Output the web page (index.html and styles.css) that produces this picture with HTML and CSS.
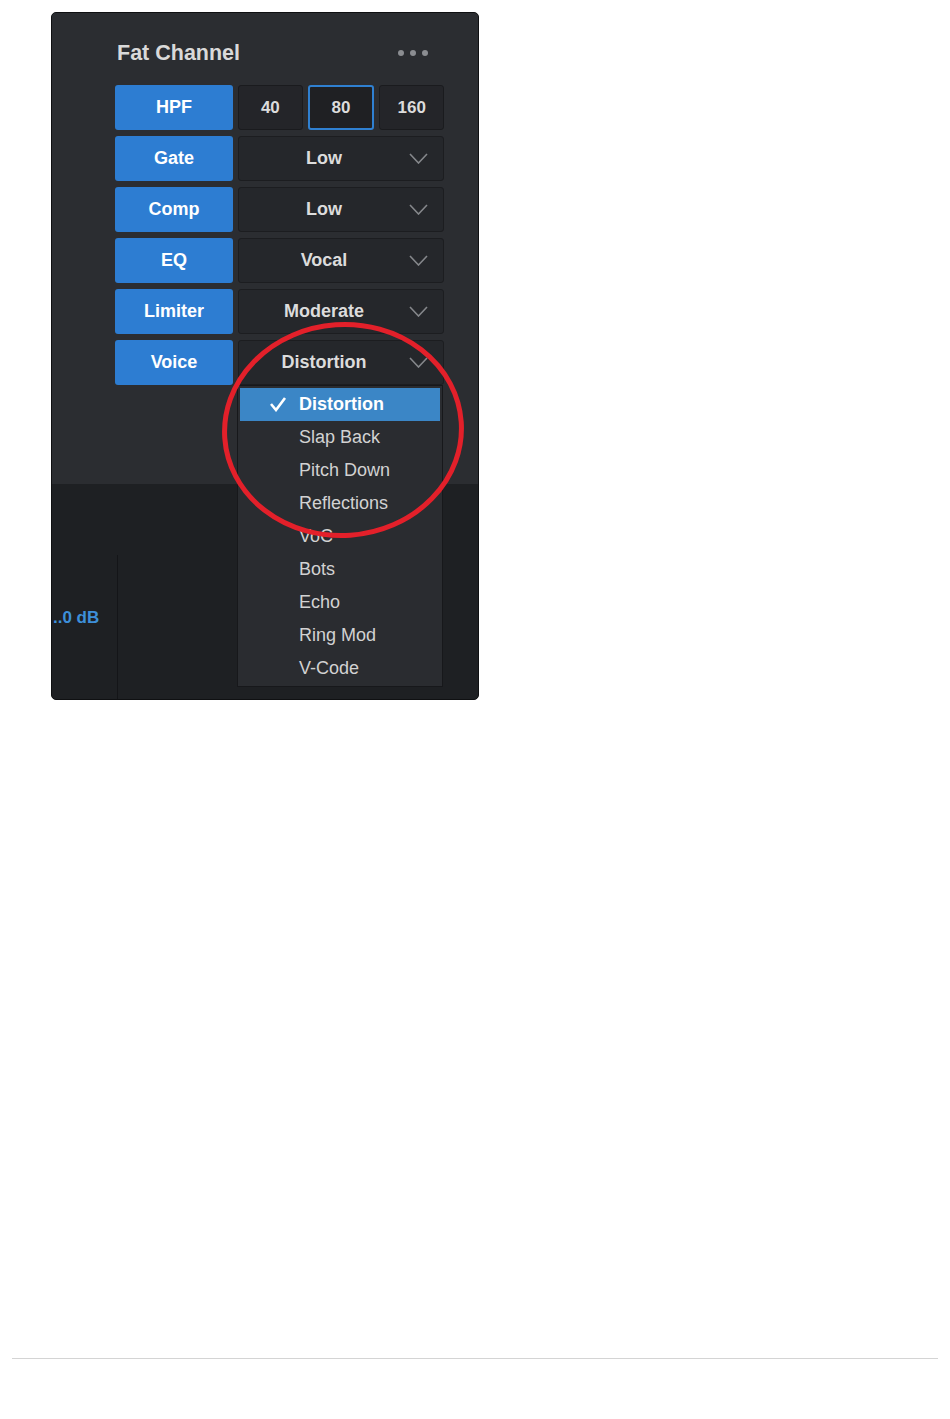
FILE: index.html
```html
<!DOCTYPE html>
<html lang="en">
<head>
  <meta charset="UTF-8" />
  <meta name="viewport" content="width=device-width, initial-scale=1.0"/>
  <title>Fat Channel Voice Presets</title>
  <link rel="stylesheet" href="styles.css">
</head>
<body>

  <div class="post">
    <!-- SCREENSHOT PANEL -->
    <div class="panel">
      <div class="panel-top">
        <div class="title-row">
          <h2>Fat Channel</h2>
          <svg class="dots" width="30" height="8" viewBox="0 0 30 8">
            <circle cx="3" cy="4" r="3" />
            <circle cx="15" cy="4" r="3" />
            <circle cx="27" cy="4" r="3" />
          </svg>
        </div>

        <div class="controls">
          <button class="btn-blue">HPF</button>
          <div class="freq">
            <button class="btn-dark">40</button>
            <button class="btn-dark active">80</button>
            <button class="btn-dark">160</button>
          </div>

          <button class="btn-blue">Gate</button>
          <div class="select"><span>Low</span><svg class="chev" width="19" height="11" viewBox="0 0 19 11"><polyline points="1,1 9.5,10 18,1" /></svg></div>

          <button class="btn-blue">Comp</button>
          <div class="select"><span>Low</span><svg class="chev" width="19" height="11" viewBox="0 0 19 11"><polyline points="1,1 9.5,10 18,1" /></svg></div>

          <button class="btn-blue">EQ</button>
          <div class="select"><span>Vocal</span><svg class="chev" width="19" height="11" viewBox="0 0 19 11"><polyline points="1,1 9.5,10 18,1" /></svg></div>

          <button class="btn-blue">Limiter</button>
          <div class="select"><span>Moderate</span><svg class="chev" width="19" height="11" viewBox="0 0 19 11"><polyline points="1,1 9.5,10 18,1" /></svg></div>

          <button class="btn-blue">Voice</button>
          <div class="select"><span>Distortion</span><svg class="chev" width="19" height="11" viewBox="0 0 19 11"><polyline points="1,1 9.5,10 18,1" /></svg></div>
        </div>
      </div>

      <div class="panel-bottom">
        <div class="meter">
          <span class="db">..0 dB</span>
        </div>
      </div>

      <!-- OPEN DROPDOWN -->
      <ul class="menu">
        <li class="selected">
          <svg class="check" width="18" height="16" viewBox="0 0 18 16"><polyline points="2,8 7,14 16,2" /></svg>
          Distortion
        </li>
        <li>Slap Back</li>
        <li>Pitch Down</li>
        <li>Reflections</li>
        <li>VoC</li>
        <li>Bots</li>
        <li>Echo</li>
        <li>Ring Mod</li>
        <li>V-Code</li>
      </ul>

      <!-- red annotation circle -->
      <svg class="ring" width="426" height="686" viewBox="0 0 426 686">
        <ellipse cx="291" cy="417" rx="118.5" ry="105.5" transform="rotate(-4 291 417)" />
      </svg>
    </div>

    <div class="rule"></div>
  </div>

</body>
</html>
```

FILE: styles.css
```css
* {
  box-sizing: border-box;
  margin: 0;
  padding: 0;
}

body {
  font-family: "Liberation Sans", Arial, sans-serif;
  background: #fff;
}

.post {
  padding: 12px 12px 0;
}

.panel {
  position: relative;
  width: 428px;
  height: 688px;
  margin-left: 39px;
  display: flex;
  flex-direction: column;
  border: 1px solid #0f1012;
  border-radius: 5px;
  overflow: hidden;
  background: #1e2023;
}

.panel-top {
  height: 471px;
  background: #2b2d31;
  padding: 28px 0 0 63px;
}

.title-row {
  width: 313px;
  height: 24px;
  display: flex;
  justify-content: space-between;
  align-items: center;
  padding-left: 2px;
  margin-bottom: 20px;
}

.title-row h2 {
  font-size: 21.5px;
  font-weight: bold;
  color: #d9d9d9;
}

.dots circle {
  fill: #8b8d91;
}

.controls {
  display: grid;
  grid-template-columns: 118px 206px;
  grid-auto-rows: 45px;
  column-gap: 5px;
  row-gap: 6px;
}

button {
  font-family: inherit;
  border: none;
  cursor: pointer;
}

.btn-blue {
  background: #2d7dd2;
  color: #fff;
  font-size: 18px;
  font-weight: bold;
  border-radius: 3px;
}

.freq {
  display: flex;
  gap: 5px;
}

.btn-dark {
  flex: 1;
  background: #242529;
  border: 1px solid #1a1b1e;
  color: #dcdcdc;
  font-size: 17px;
  font-weight: bold;
  border-radius: 3px;
}

.btn-dark.active {
  background: #1f2023;
  border: 2px solid #2f80d1;
}

.select {
  display: flex;
  align-items: center;
  background: #25272b;
  border: 1px solid #1c1d20;
  border-radius: 3px;
  padding-right: 15px;
}

.select span {
  flex: 1;
  text-align: center;
  color: #dcdcdc;
  font-size: 18px;
  font-weight: bold;
}

.chev polyline {
  fill: none;
  stroke: #85878b;
  stroke-width: 1.6;
}

.panel-bottom {
  flex: 1;
  display: flex;
}

.meter {
  width: 66px;
  margin-top: 71px;
  border-right: 1px solid #141518;
  padding: 54px 0 0 1px;
}

.db {
  display: block;
  line-height: 18px;
  color: #3d8fd9;
  font-size: 17px;
  font-weight: bold;
}

.menu {
  position: absolute;
  left: 185px;
  top: 372px;
  width: 206px;
  height: 302px;
  list-style: none;
  background: #2a2c30;
  border: 1px solid #17181b;
  padding: 2px 2px 0;
}

.menu li {
  height: 33px;
  display: flex;
  align-items: center;
  padding-left: 59px;
  color: #d2d2d2;
  font-size: 18px;
  position: relative;
}

.menu li.selected {
  background: #3b86c6;
  color: #fff;
  font-weight: bold;
}

.check {
  position: absolute;
  left: 29px;
  top: 8px;
}

.check polyline {
  fill: none;
  stroke: #fff;
  stroke-width: 2.6;
}

.ring {
  position: absolute;
  left: 0;
  top: 0;
  pointer-events: none;
}

.ring ellipse {
  fill: none;
  stroke: #e3202a;
  stroke-width: 5;
}

.rule {
  margin-top: 658px;
  height: 1px;
  background: #d4d4d4;
  box-shadow: 0 1px 1px #ececec;
}
```
